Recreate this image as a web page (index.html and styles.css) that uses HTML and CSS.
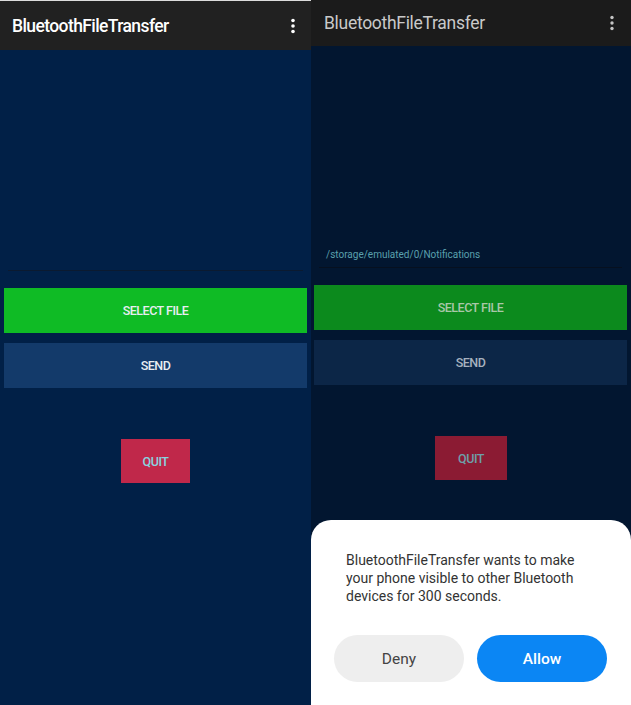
FILE: index.html
```html
<!DOCTYPE html>
<html>
<head>
<meta charset="utf-8">
<link rel="stylesheet" href="styles.css">
</head>
<body>
<div class="screens">
  <section class="panel panel-left">
    <header class="toolbar toolbar-left">
      <span class="title">BluetoothFileTransfer</span>
      <svg class="kebab" width="6" height="16" viewBox="0 0 6 16"><circle cx="3" cy="2.5" r="1.8"/><circle cx="3" cy="8" r="1.8"/><circle cx="3" cy="13.5" r="1.8"/></svg>
    </header>
    <div class="field field-left"></div>
    <div class="btn btn-select">SELECT FILE</div>
    <div class="btn btn-send">SEND</div>
    <div class="btn btn-quit">QUIT</div>
  </section>
  <section class="panel panel-right">
    <header class="toolbar toolbar-right">
      <span class="title">BluetoothFileTransfer</span>
      <svg class="kebab" width="6" height="16" viewBox="0 0 6 16"><circle cx="3" cy="2.5" r="1.7"/><circle cx="3" cy="8" r="1.7"/><circle cx="3" cy="13.5" r="1.7"/></svg>
    </header>
    <div class="field field-right"><span class="path">/storage/emulated/0/Notifications</span></div>
    <div class="btn btn-select dim">SELECT FILE</div>
    <div class="btn btn-send dim">SEND</div>
    <div class="btn btn-quit dim">QUIT</div>
    <div class="dialog">
      <p class="msg">BluetoothFileTransfer wants to make your phone visible to other Bluetooth devices for 300 seconds.</p>
      <div class="actions">
        <div class="pill deny">Deny</div>
        <div class="pill allow">Allow</div>
      </div>
    </div>
  </section>
</div>
</body>
</html>
```
FILE: styles.css
```css
* { box-sizing: border-box; }
html, body { margin: 0; padding: 0; }
body { width: 631px; height: 705px; overflow: hidden; font-family: Roboto, "Noto Sans", sans-serif; background: #021630; }
.screens { display: flex; height: 705px; }
.panel { display: flex; flex-direction: column; height: 705px; }
.panel-left { width: 311px; background: #012047; }
.panel-right { width: 320px; background: #021630; position: relative; }

.toolbar { display: flex; align-items: center; justify-content: space-between; flex: none; }
.toolbar-left { height: 50px; background: #212121; border-top: 1px solid #dcdcdc; padding: 0 15px 0 12px; }
.toolbar-right { height: 46px; background: #1b1b1b; padding: 0 16px 0 13px; }
.title { font-size: 17.5px; font-weight: 500; color: #fff; letter-spacing: -0.6px; }
.toolbar-right .title { color: #c9c9c9; font-weight: 400; letter-spacing: -0.3px; }
.kebab { fill: #fff; }
.toolbar-right .kebab { fill: #c4c4c4; }

.field { flex: none; }
.field-left { height: 221px; margin: 0 8px; border-bottom: 1px solid #0b1a30; }
.field-right { height: 222px; margin: 0 9px 0 8px; border-bottom: 1px solid #06101f; padding-top: 197px; padding-left: 7px; }
.path { font-size: 10px; color: #5aa0ad; }

.btn { flex: none; display: flex; align-items: center; justify-content: center; font-size: 12.5px; font-weight: 500; letter-spacing: -0.5px; color: #e8eef2; }
.btn-select { height: 45px; margin: 17px 4px 0 4px; background: #0fbb25; }
.btn-send { height: 45px; margin: 10px 4px 0 4px; background: #133a6a; }
.btn-quit { width: 69px; height: 44px; margin: 51px auto 0; background: #c0284a; color: #88d4e0; }

.panel-right .btn-select { margin: 17px 4px 0 3px; height: 45px; background: #0c8a1d; color: #a9c7a8; }
.panel-right .btn-send { margin: 10px 4px 0 3px; height: 45px; background: #0c2647; color: #a6b1bf; }
.panel-right .btn-quit { width: 72px; margin: 51px auto 0; background: #8b1b33; color: #6e9fa9; }

.dialog { position: absolute; left: 0; right: 0; bottom: 0; height: 185px; background: #fff; border-radius: 20px 20px 0 0; padding: 31px 24px 0 35px; }
.msg { margin: 0; width: 232px; font-size: 14px; line-height: 18px; color: #333; }
.actions { display: flex; gap: 13px; margin-top: 30px; }
.pill { width: 130px; height: 47px; border-radius: 24px; display: flex; align-items: center; justify-content: center; font-size: 15.5px; font-weight: 500; }
.deny { background: #eeeeee; color: #444; margin-left: -12px; font-weight: 400; }
.allow { background: #0b86f4; color: #fff; }
```
